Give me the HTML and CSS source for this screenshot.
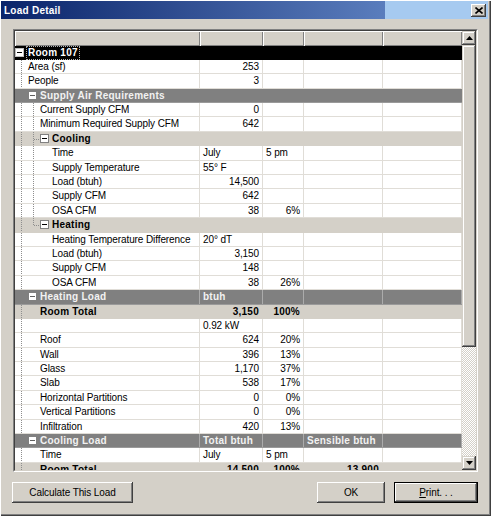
FILE: index.html
```html
<!DOCTYPE html>
<html>
<head>
<meta charset="utf-8">
<title>Load Detail</title>
<link rel="stylesheet" href="styles.css">
</head>
<body>
<div class="window">
  <div class="titlebar">
    <span class="title">Load Detail</span>
    <span class="close"><svg width="8" height="7" viewBox="0 0 8 7"><path d="M0.5 0.5 L7.5 6.5 M7.5 0.5 L0.5 6.5" stroke="#000" stroke-width="1.6" fill="none"/></svg></span>
  </div>
  <div class="grid">
    <div class="grid-in">
      <div class="main">
        <div class="row head"><div class="hc"></div><div class="hc"></div><div class="hc"></div><div class="hc"></div><div class="hc"></div></div>
        <div class="rows">
          <div class="row root"><div class="cell span tc"><span class="box bk"></span><span class="focus">Room 107</span></div></div>
          <div class="row"><div class="cell l0 t0">Area (sf)</div><div class="cell num">253</div><div class="cell"></div><div class="cell"></div><div class="cell"></div></div>
          <div class="row"><div class="cell l0 t0">People</div><div class="cell num">3</div><div class="cell"></div><div class="cell"></div><div class="cell"></div></div>
          <div class="row sec"><div class="cell span tc ls"><span class="box"></span><span class="lbl">Supply Air Requirements</span></div></div>
          <div class="row"><div class="cell l1 t01">Current Supply CFM</div><div class="cell num">0</div><div class="cell"></div><div class="cell"></div><div class="cell"></div></div>
          <div class="row"><div class="cell l1 t01">Minimum Required Supply CFM</div><div class="cell num">642</div><div class="cell"></div><div class="cell"></div><div class="cell"></div></div>
          <div class="row sub"><div class="cell span tc lsub full"><span class="conn"></span><span class="box"></span><span class="lbl">Cooling</span></div></div>
          <div class="row"><div class="cell l2 t01">Time</div><div class="cell">July</div><div class="cell">5 pm</div><div class="cell"></div><div class="cell"></div></div>
          <div class="row"><div class="cell l2 t01">Supply Temperature</div><div class="cell">55° F</div><div class="cell"></div><div class="cell"></div><div class="cell"></div></div>
          <div class="row"><div class="cell l2 t01">Load (btuh)</div><div class="cell num">14,500</div><div class="cell"></div><div class="cell"></div><div class="cell"></div></div>
          <div class="row"><div class="cell l2 t01">Supply CFM</div><div class="cell num">642</div><div class="cell"></div><div class="cell"></div><div class="cell"></div></div>
          <div class="row"><div class="cell l2 t01">OSA CFM</div><div class="cell num">38</div><div class="cell num">6%</div><div class="cell"></div><div class="cell"></div></div>
          <div class="row sub"><div class="cell span tc lsub t0"><span class="conn last"></span><span class="box"></span><span class="lbl">Heating</span></div></div>
          <div class="row"><div class="cell l2 t0">Heating Temperature Difference</div><div class="cell">20° dT</div><div class="cell"></div><div class="cell"></div><div class="cell"></div></div>
          <div class="row"><div class="cell l2 t0">Load (btuh)</div><div class="cell num">3,150</div><div class="cell"></div><div class="cell"></div><div class="cell"></div></div>
          <div class="row"><div class="cell l2 t0">Supply CFM</div><div class="cell num">148</div><div class="cell"></div><div class="cell"></div><div class="cell"></div></div>
          <div class="row"><div class="cell l2 t0">OSA CFM</div><div class="cell num">38</div><div class="cell num">26%</div><div class="cell"></div><div class="cell"></div></div>
          <div class="row sec cols"><div class="cell tc ls"><span class="box"></span><span class="lbl">Heating Load</span></div><div class="cell">btuh</div><div class="cell"></div><div class="cell"></div><div class="cell"></div></div>
          <div class="row total"><div class="cell l1 t0">Room Total</div><div class="cell num">3,150</div><div class="cell num">100%</div><div class="cell"></div><div class="cell"></div></div>
          <div class="row"><div class="cell l1 t0"></div><div class="cell">0.92 kW</div><div class="cell"></div><div class="cell"></div><div class="cell"></div></div>
          <div class="row"><div class="cell l1 t0">Roof</div><div class="cell num">624</div><div class="cell num">20%</div><div class="cell"></div><div class="cell"></div></div>
          <div class="row"><div class="cell l1 t0">Wall</div><div class="cell num">396</div><div class="cell num">13%</div><div class="cell"></div><div class="cell"></div></div>
          <div class="row"><div class="cell l1 t0">Glass</div><div class="cell num">1,170</div><div class="cell num">37%</div><div class="cell"></div><div class="cell"></div></div>
          <div class="row"><div class="cell l1 t0">Slab</div><div class="cell num">538</div><div class="cell num">17%</div><div class="cell"></div><div class="cell"></div></div>
          <div class="row"><div class="cell l1 t0">Horizontal Partitions</div><div class="cell num">0</div><div class="cell num">0%</div><div class="cell"></div><div class="cell"></div></div>
          <div class="row"><div class="cell l1 t0">Vertical Partitions</div><div class="cell num">0</div><div class="cell num">0%</div><div class="cell"></div><div class="cell"></div></div>
          <div class="row"><div class="cell l1 t0">Infiltration</div><div class="cell num">420</div><div class="cell num">13%</div><div class="cell"></div><div class="cell"></div></div>
          <div class="row sec cols"><div class="cell tc ls"><span class="box"></span><span class="lbl">Cooling Load</span></div><div class="cell">Total btuh</div><div class="cell"></div><div class="cell">Sensible btuh</div><div class="cell"></div></div>
          <div class="row"><div class="cell l1 t0">Time</div><div class="cell">July</div><div class="cell">5 pm</div><div class="cell"></div><div class="cell"></div></div>
          <div class="row total"><div class="cell l1 t0">Room Total</div><div class="cell num">14,500</div><div class="cell num">100%</div><div class="cell num">13,900</div><div class="cell"></div></div>
        </div>
      </div>
      <div class="sb">
        <div class="sb-btn"><svg width="7" height="4" viewBox="0 0 7 4"><polygon points="3.5,0 7,4 0,4" fill="#000"/></svg></div>
        <div class="thumb"></div>
        <div class="track"></div>
        <div class="sb-btn"><svg width="7" height="4" viewBox="0 0 7 4"><polygon points="0,0 7,0 3.5,4" fill="#000"/></svg></div>
      </div>
    </div>
  </div>
  <div class="buttons">
    <div class="btn calc">Calculate This Load</div>
    <div class="btn ok">OK</div>
    <div class="btn print"><span><u>P</u>rint. . .</span></div>
  </div>
</div>
</body>
</html>
```

FILE: styles.css
```css
* { box-sizing: border-box; }
html, body { margin: 0; padding: 0; background: #d4d0c8; }
body {
  font-family: "Liberation Sans", Arial, sans-serif;
  font-size: 10px;
  color: #000;
  letter-spacing: -0.1px;
}

.window {
  width: 491px;
  height: 516px;
  padding: 1px 3px 3px 1px;
  background: #d4d0c8;
  box-shadow: inset 1px 1px #ffffff, inset -1px -1px #404040, inset -2px -2px #808080;
  display: flex;
  flex-direction: column;
}

.titlebar {
  height: 18px;
  flex: none;
  display: flex;
  align-items: center;
  justify-content: space-between;
  padding: 0 2px 0 3px;
  background: linear-gradient(to right, #0a246a 0, #5a7dbd 384px, #a6caf0 384px);
}
.title {
  color: #fff;
  font-weight: bold;
  letter-spacing: 0.25px;
}
.close {
  width: 15px;
  height: 13px;
  display: flex;
  align-items: center;
  justify-content: center;
  background: #d4d0c8;
  box-shadow: inset -1px -1px #404040, inset 1px 1px #ffffff, inset -2px -2px #808080;
}

.grid {
  flex: none;
  margin: 10px 0 0 12px;
  width: 465px;
  height: 443px;
  border: 1px solid;
  border-color: #808080 #ffffff #ffffff #808080;
}
.grid-in {
  height: 100%;
  display: flex;
  background: #fff;
  border: 1px solid;
  border-color: #404040 #d4d0c8 #d4d0c8 #404040;
}
.main {
  width: 447px;
  flex: none;
  display: flex;
  flex-direction: column;
}
.rows {
  flex: 1;
  overflow: hidden;
}

.row {
  display: grid;
  grid-template-columns: 185px 63px 41px 79px 79px;
  height: 14.4px;
  border-bottom: 1px solid #e0ddd7;
}
.head {
  height: 14.5px;
  border-bottom: 0;
  background: #d4d0c8;
}
.hc {
  box-shadow: inset 1px 1px #ffffff, inset -1px -1px #808080;
}

.cell {
  border-right: 1px solid #e0ddd7;
  padding: 0 3px;
  line-height: 13.4px;
  white-space: nowrap;
  overflow: hidden;
}
.num { text-align: right; }
.span { grid-column: 1 / -1; border-right: 0; }
.tc { display: flex; align-items: center; }

.l0 { padding-left: 13px; }
.l1 { padding-left: 25px; }
.l2 { padding-left: 37px; }
.ls { padding-left: 13px; }
.lsub { padding-left: 18px; }

.t0 {
  background-image: linear-gradient(#8e8e8e 50%, transparent 50%);
  background-size: 1px 2px;
  background-repeat: repeat-y;
  background-position: 6px 0;
}
.t01, .full {
  background-image: linear-gradient(#8e8e8e 50%, transparent 50%), linear-gradient(#8e8e8e 50%, transparent 50%);
  background-size: 1px 2px, 1px 2px;
  background-repeat: repeat-y, repeat-y;
  background-position: 6px 0, 18px 0;
}

.conn {
  width: 7px;
  height: 100%;
  flex: none;
  background-image: linear-gradient(to right, #8e8e8e 50%, transparent 50%);
  background-size: 2px 1px;
  background-repeat: repeat-x;
  background-position: 1px 7px;
}
.conn.last {
  background-image: linear-gradient(to right, #8e8e8e 50%, transparent 50%), repeating-linear-gradient(to bottom, #8e8e8e 0 1px, transparent 1px 2px);
  background-size: 2px 1px, 1px 7px;
  background-repeat: repeat-x, no-repeat;
  background-position: 1px 7px, 0 0;
}

.box {
  width: 9px;
  height: 9px;
  flex: none;
  border: 1px solid #808080;
  background: #fff linear-gradient(#000, #000) center / 5px 1px no-repeat;
}
.box.bk { border-color: #c0c0c0; }
.sec .box { background: #fff linear-gradient(#606060, #606060) center / 5px 1px no-repeat; }
.lbl { margin-left: 3px; }

.root { background: #000; border-bottom: 0; }
.root .cell { padding-left: 0; color: #fff; font-weight: bold; letter-spacing: 0.25px; }
.focus {
  margin-left: 3px;
  padding: 0 1px;
  line-height: 12px;
  outline: 1px dotted #b0b0b0;
}

.sec { background: #808080; border-bottom-color: #9a9a9a; }
.sec .cell { color: #f2f2f2; font-weight: bold; letter-spacing: 0.25px; border-right-color: #ababab; }

.sub { background: #d4d0c8; border-bottom-color: #d4d0c8; }
.sub .cell { font-weight: bold; letter-spacing: 0.25px; }

.total { background: #d4d0c8; border-bottom-color: #d4d0c8; }
.total .cell { font-weight: bold; letter-spacing: 0.25px; border-right-color: #d4d0c8; }

.sb {
  width: 14px;
  flex: none;
  display: flex;
  flex-direction: column;
  background-color: #d4d0c8;
  background-image: conic-gradient(#ffffff 25%, #d4d0c8 0 50%, #ffffff 0 75%, #d4d0c8 0);
  background-size: 2px 2px;
}
.sb-btn, .thumb {
  flex: none;
  background: #d4d0c8;
  box-shadow: inset -1px -1px #404040, inset 1px 1px #d4d0c8, inset -2px -2px #808080, inset 2px 2px #ffffff;
}
.sb-btn {
  height: 14px;
  display: flex;
  align-items: center;
  justify-content: center;
}
.thumb { height: 302px; }
.track { flex: 1; }

.buttons {
  flex: none;
  display: flex;
  margin-top: 10px;
  padding: 0 10px 0 11px;
  height: 21px;
}
.btn {
  height: 21px;
  display: flex;
  align-items: center;
  justify-content: center;
  background: #d4d0c8;
  box-shadow: inset -1px -1px #404040, inset 1px 1px #ffffff, inset -2px -2px #808080;
}
.calc { width: 121px; }
.ok { width: 68px; margin-left: auto; }
.print { width: 84px; margin-left: 9px; border: 1px solid #000; }
```
